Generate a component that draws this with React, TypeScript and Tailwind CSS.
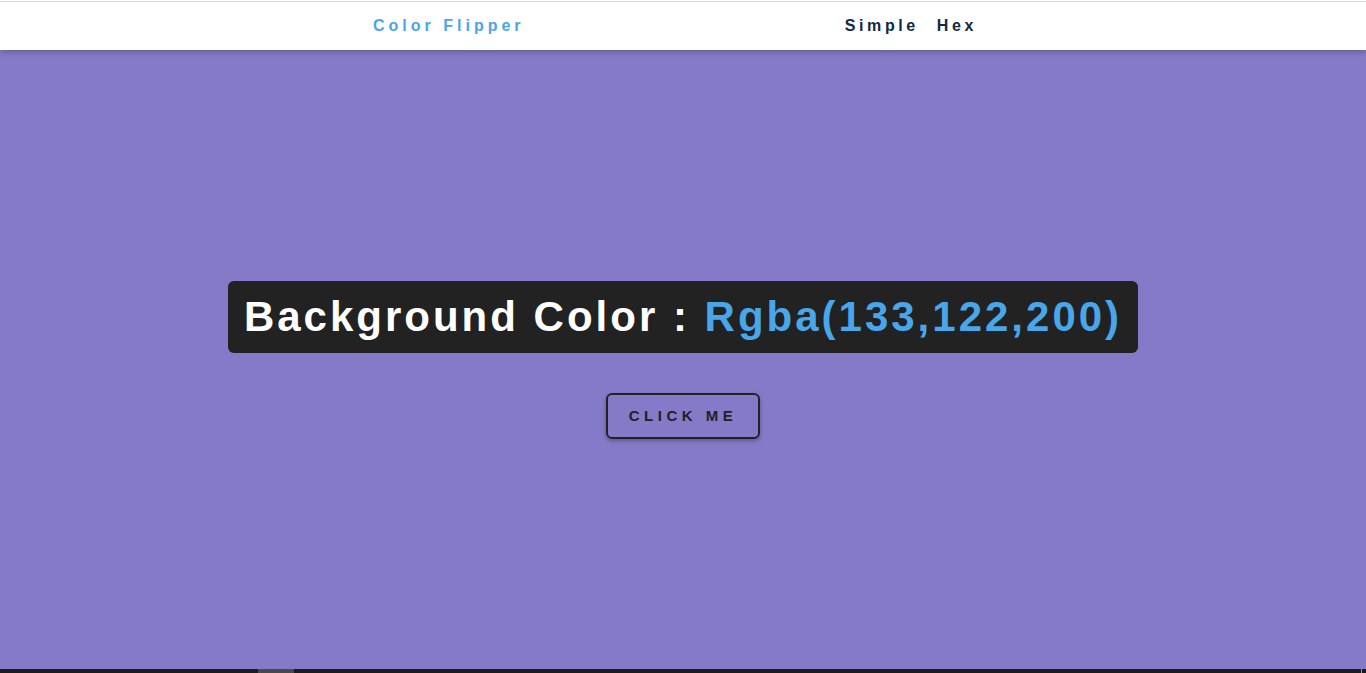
import React from "react";

const App: React.FC = () => {
  const color = "Rgba(133,122,200)";

  return (
    <div
      className="flex h-screen flex-col overflow-hidden bg-[#857ac8]"
      style={{ fontFamily: '"Liberation Sans", Arial, sans-serif' }}
    >
      <nav className="relative z-10 h-[50px] bg-white pt-px shadow-[0_2px_6px_rgba(0,0,0,0.25)]">
        <div className="flex h-full items-center justify-between border-t border-[#dddddd] pl-[373px] pr-[389px]">
          <a className="text-[16px] font-bold tracking-[4px] text-[#49a6e9]">
            Color Flipper
          </a>
          <div className="flex gap-[18px] text-[16px] font-bold tracking-[3.6px] text-[#102a42]">
            <a>Simple</a>
            <a>Hex</a>
          </div>
        </div>
      </nav>

      <main className="flex flex-1 flex-col items-center justify-center gap-10">
        <h2 className="rounded-md bg-[#222222] px-4 py-2 text-[42px] font-bold leading-[56px] tracking-[3px] text-white">
          Background Color : <span className="text-[#49a6e9]">{color}</span>
        </h2>
        <button className="rounded-md border-2 border-[#222222] px-[21px] py-3 text-[15px] font-bold uppercase leading-[18px] tracking-[4.5px] text-[#222222] shadow-[0_2px_4px_rgba(0,0,0,0.3)]">
          Click Me
        </button>
      </main>

      <div className="flex h-[4px] bg-[#1c1c1c]">
        <div className="ml-[258px] w-[36px] bg-[#4a4a4a]" />
        <div className="ml-auto mr-[4px] w-px bg-[#9a9a9a]" />
      </div>
    </div>
  );
};

export default App;
